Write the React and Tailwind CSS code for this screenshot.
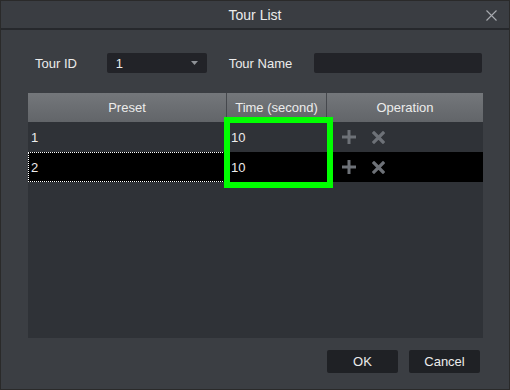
import React from "react";

const rows = [
  { id: 1, time: 10, selected: false },
  { id: 2, time: 10, selected: true },
];

const PlusIcon = () => (
  <svg width="14" height="14" viewBox="0 0 14 14">
    <path d="M5.5 0h3v5.5H14v3H8.5V14h-3V8.5H0v-3h5.5z" fill="#6d7177" />
  </svg>
);

const CrossIcon = () => (
  <svg width="13" height="13" viewBox="0 0 13 13">
    <path d="M2 2l9 9M11 2l-9 9" stroke="#6d7177" strokeWidth="3.2" strokeLinecap="square" />
  </svg>
);

const App = () => {
  return (
    <div
      className="w-[510px] h-[390px] bg-[#3b3e43] border border-[#2a2a2a] flex flex-col text-[#ececec] overflow-hidden"
      style={{ fontFamily: '"Liberation Sans", Arial, sans-serif' }}
    >
      {/* title bar */}
      <div className="relative h-[29px] flex items-center justify-center bg-[#3a3d42] border-b-2 border-[#26282c] shrink-0">
        <span className="text-[14px] pt-[1px]">Tour List</span>
        <svg className="absolute right-[12px] top-[9px]" width="11" height="11" viewBox="0 0 11 11">
          <path d="M0.5 0.5l10 10M10.5 0.5l-10 10" stroke="#a8abb0" strokeWidth="1.1" />
        </svg>
      </div>

      <div className="flex-1 flex flex-col px-[27px]">
        {/* tour id / name */}
        <div className="flex items-center mt-[23px] h-[20px] text-[13px]">
          <span className="w-[79px] pl-[7px] pt-[1px]">Tour ID</span>
          <div className="w-[100px] h-[20px] bg-[#222328] rounded-[2px] flex items-center justify-between pl-[9px] pr-[9px]">
            <span className="pt-[1px]">1</span>
            <svg width="7" height="4" viewBox="0 0 7 4">
              <path d="M0 0h7L3.5 4z" fill="#8f9297" />
            </svg>
          </div>
          <span className="ml-[22px] w-[86px] pt-[1px]">Tour Name</span>
          <div className="w-[168px] h-[20px] bg-[#222328] rounded-[2px]" />
        </div>

        {/* table */}
        <div className="mt-[20px] w-[455px] h-[245px] bg-[#2f3237] flex flex-col">
          <div className="flex h-[29px] text-[13px] bg-gradient-to-b from-[#74777b] to-[#626569]">
            <div className="w-[199px] flex items-center justify-center border-r border-[#45484d]">Preset</div>
            <div className="w-[100px] flex items-center justify-center border-r border-[#45484d]">Time (second)</div>
            <div className="flex-1 flex items-center justify-center">Operation</div>
          </div>
          {rows.map((row) => (
            <div
              key={row.id}
              className={`relative flex h-[30px] text-[13px] ${row.selected ? "bg-black" : "bg-[#2f3237]"}`}
            >
              <div className="w-[199px] flex items-center pl-[3px] pt-[2px]">
                {row.selected && (
                  <div className="absolute left-0 top-0 w-[197px] h-[30px] border border-dotted border-white" />
                )}
                <span className="relative">{row.id}</span>
              </div>
              <div className="w-[100px] flex items-center pl-[4px] pt-[2px]">{row.time}</div>
              <div className="flex-1 flex items-center gap-[16px] pl-[15px]">
                <PlusIcon />
                <CrossIcon />
              </div>
            </div>
          ))}
          {/* highlight */}
          <div className="relative">
            <div className="absolute left-[196px] top-[-65px] w-[109px] h-[71px] border-[6px] border-[#00ff00]" />
          </div>
        </div>

        {/* buttons */}
        <div className="flex justify-end gap-[11px] mt-[12px] pr-[2px]">
          <button className="w-[71px] h-[23px] bg-[#1f2125] rounded-[2px] text-[13px] text-[#ececec]">OK</button>
          <button className="w-[71px] h-[23px] bg-[#1f2125] rounded-[2px] text-[13px] text-[#ececec]">Cancel</button>
        </div>
      </div>
    </div>
  );
};

export default App;
